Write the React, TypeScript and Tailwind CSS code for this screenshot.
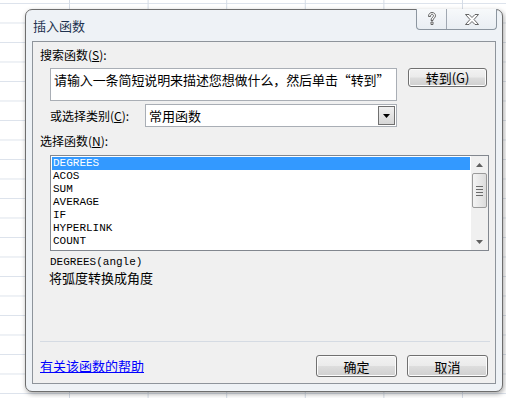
import React from "react";

const cjk = "font-['SimSun','Noto_Sans_CJK_SC',sans-serif]";

function WinButton({ children, className = "" }: { children: React.ReactNode; className?: string }) {
  return (
    <div
      className={`flex items-center justify-center rounded-[3px] border border-[#707070] bg-[linear-gradient(to_bottom,#f2f2f2_0%,#ebebeb_48%,#dddddd_52%,#cfcfcf_100%)] shadow-[inset_0_0_0_1px_#fcfcfc] text-[13px] leading-none text-black ${className}`}
    >
      {children}
    </div>
  );
}

const items = ["DEGREES", "ACOS", "SUM", "AVERAGE", "IF", "HYPERLINK", "COUNT"];

export default function App() {
  return (
    <div className="relative h-[398px] w-[506px] overflow-hidden bg-white bg-[linear-gradient(to_right,#d5dce6_1px,transparent_1px),linear-gradient(to_bottom,#dde3ec_1px,transparent_1px)] bg-[size:78.6px_19.5px] bg-[position:69px_3px]">
      {/* Window */}
      <div className={`absolute left-[25px] top-[9px] flex h-[383px] w-[478px] flex-col rounded-[7px] border border-[#6e6e6e] bg-[#eef2f6] shadow-[1px_2px_5px_rgba(0,0,0,0.35)] ${cjk}`}>
        {/* Title bar */}
        <div className="relative flex h-[31px] items-center pl-[7px] text-[13px] text-[#1e3250]">
          插入函数
          <div className="absolute right-[5px] top-[-1px] flex h-[21px] overflow-hidden rounded-b-[4px] border border-t-0 border-[#8c96a0] bg-[linear-gradient(to_bottom,#f7f9fb,#e9eef3)]">
            <div className="flex w-[30px] items-center justify-center border-r border-[#a0a8b2]">
              <svg width="10" height="14" viewBox="0 0 10 14">
                <path
                  d="M1.5 4.5 C1.5 1.5 3.5 0.5 5 0.5 C7 0.5 8.5 1.8 8.5 3.8 C8.5 5.8 6 6.2 6 8.5 L4 8.5 C4 5.5 6.5 5.2 6.5 3.8 C6.5 2.9 5.9 2.3 5 2.3 C4 2.3 3.5 3.2 3.5 4.5 Z M4 10 L6 10 L6 12.5 L4 12.5 Z"
                  fill="#fff"
                  stroke="#555"
                  strokeWidth="0.9"
                />
              </svg>
            </div>
            <div className="flex w-[49px] items-center justify-center">
              <svg width="14" height="11" viewBox="0 0 14 11">
                <path
                  d="M0.5 0.5 L4 0.5 L7 3.5 L10 0.5 L13.5 0.5 L9 5.5 L13.5 10.5 L10 10.5 L7 7.5 L4 10.5 L0.5 10.5 L5 5.5 Z"
                  fill="#fff"
                  stroke="#555"
                  strokeWidth="0.9"
                  strokeLinejoin="round"
                />
              </svg>
            </div>
          </div>
        </div>

        {/* Client area */}
        <div className="mx-[6px] flex h-[343px] flex-col border border-[#8e949b] bg-[#f0f0f0] px-[7px] text-black">
          <div className="mt-[6px] h-[14px] text-[12px] leading-[14px]">搜索函数(<span className="underline">S</span>):</div>
          <div className="mt-[6px] flex items-start">
            <div className="ml-[10px] h-[33px] w-[347px] border border-[#a9aeb5] bg-white pl-[3px] pt-[3px] text-[13px] leading-[15px] tracking-[-0.1px]">
              请输入一条简短说明来描述您想做什么，然后单击“转到”
            </div>
            <WinButton className="ml-[11px] h-[19px] w-[79px]">转到(G)</WinButton>
          </div>
          <div className="mt-[3px] flex items-center">
            <div className="ml-[10px] w-[95px] text-[12px] leading-[14px]">或选择类别(<span className="underline">C</span>):</div>
            <div className="flex h-[23px] w-[252px] items-center border border-[#a9aeb5] bg-white">
              <div className="flex-1 pl-[3px] text-[13px] leading-none">常用函数</div>
              <div className="mr-[1px] flex h-[19px] w-[17px] items-center justify-center border border-[#707070] bg-[linear-gradient(to_bottom,#f0f0f0,#d6d6d6)]">
                <svg width="7" height="4" viewBox="0 0 7 4">
                  <path d="M0 0 L7 0 L3.5 4 Z" fill="#000" />
                </svg>
              </div>
            </div>
          </div>
          <div className="mt-[7px] h-[14px] text-[12px] leading-[14px]">选择函数(<span className="underline">N</span>):</div>
          <div className="ml-[10px] mt-[7px] flex h-[96px] w-[439px] border border-[#82878f] bg-white">
            <div className="flex-1 p-[1px] font-['Liberation_Mono',monospace] text-[11px] leading-[13px]">
              {items.map((it, i) => (
                <div key={it} className={`h-[13px] pl-[1px] ${i === 0 ? "bg-[#3399ff] text-white" : "text-black"}`}>
                  {it}
                </div>
              ))}
            </div>
            <div className="flex w-[17px] flex-col items-center bg-[#f0f0f0]">
              <div className="flex h-[17px] w-full items-center justify-center">
                <svg width="7" height="4" viewBox="0 0 7 4">
                  <path d="M0 4 L7 4 L3.5 0 Z" fill="#606060" />
                </svg>
              </div>
              <div className="flex h-[35px] w-[15px] items-center justify-center rounded-[2px] border border-[#9a9a9a] bg-[linear-gradient(to_right,#f4f4f4,#dcdcdc)]">
                <div className="flex flex-col gap-[2px]">
                  <div className="h-[1px] w-[7px] bg-[#6a6a6a]" />
                  <div className="h-[1px] w-[7px] bg-[#6a6a6a]" />
                  <div className="h-[1px] w-[7px] bg-[#6a6a6a]" />
                  <div className="h-[1px] w-[7px] bg-[#6a6a6a]" />
                </div>
              </div>
              <div className="flex-1" />
              <div className="flex h-[17px] w-full items-center justify-center">
                <svg width="7" height="4" viewBox="0 0 7 4">
                  <path d="M0 0 L7 0 L3.5 4 Z" fill="#606060" />
                </svg>
              </div>
            </div>
          </div>
          <div className="ml-[10px] mt-[5px] h-[13px] font-['Liberation_Mono',monospace] text-[11px] leading-[13px]">DEGREES(angle)</div>
          <div className="ml-[9px] mt-[1px] text-[13px] leading-[16px]">将弧度转换成角度</div>
          <div className="flex-1" />
          <div className="mr-[-2px] h-[1px] bg-[#d5dbe3]" />
          <div className="mb-[6px] mt-[13px] flex items-center">
            <div className="flex-1 text-[13px] leading-[16px] text-[#0000ff] underline">有关该函数的帮助</div>
            <WinButton className="h-[22px] w-[81px]">确定</WinButton>
            <WinButton className="ml-[10px] h-[22px] w-[81px]">取消</WinButton>
          </div>
        </div>
      </div>
    </div>
  );
}
